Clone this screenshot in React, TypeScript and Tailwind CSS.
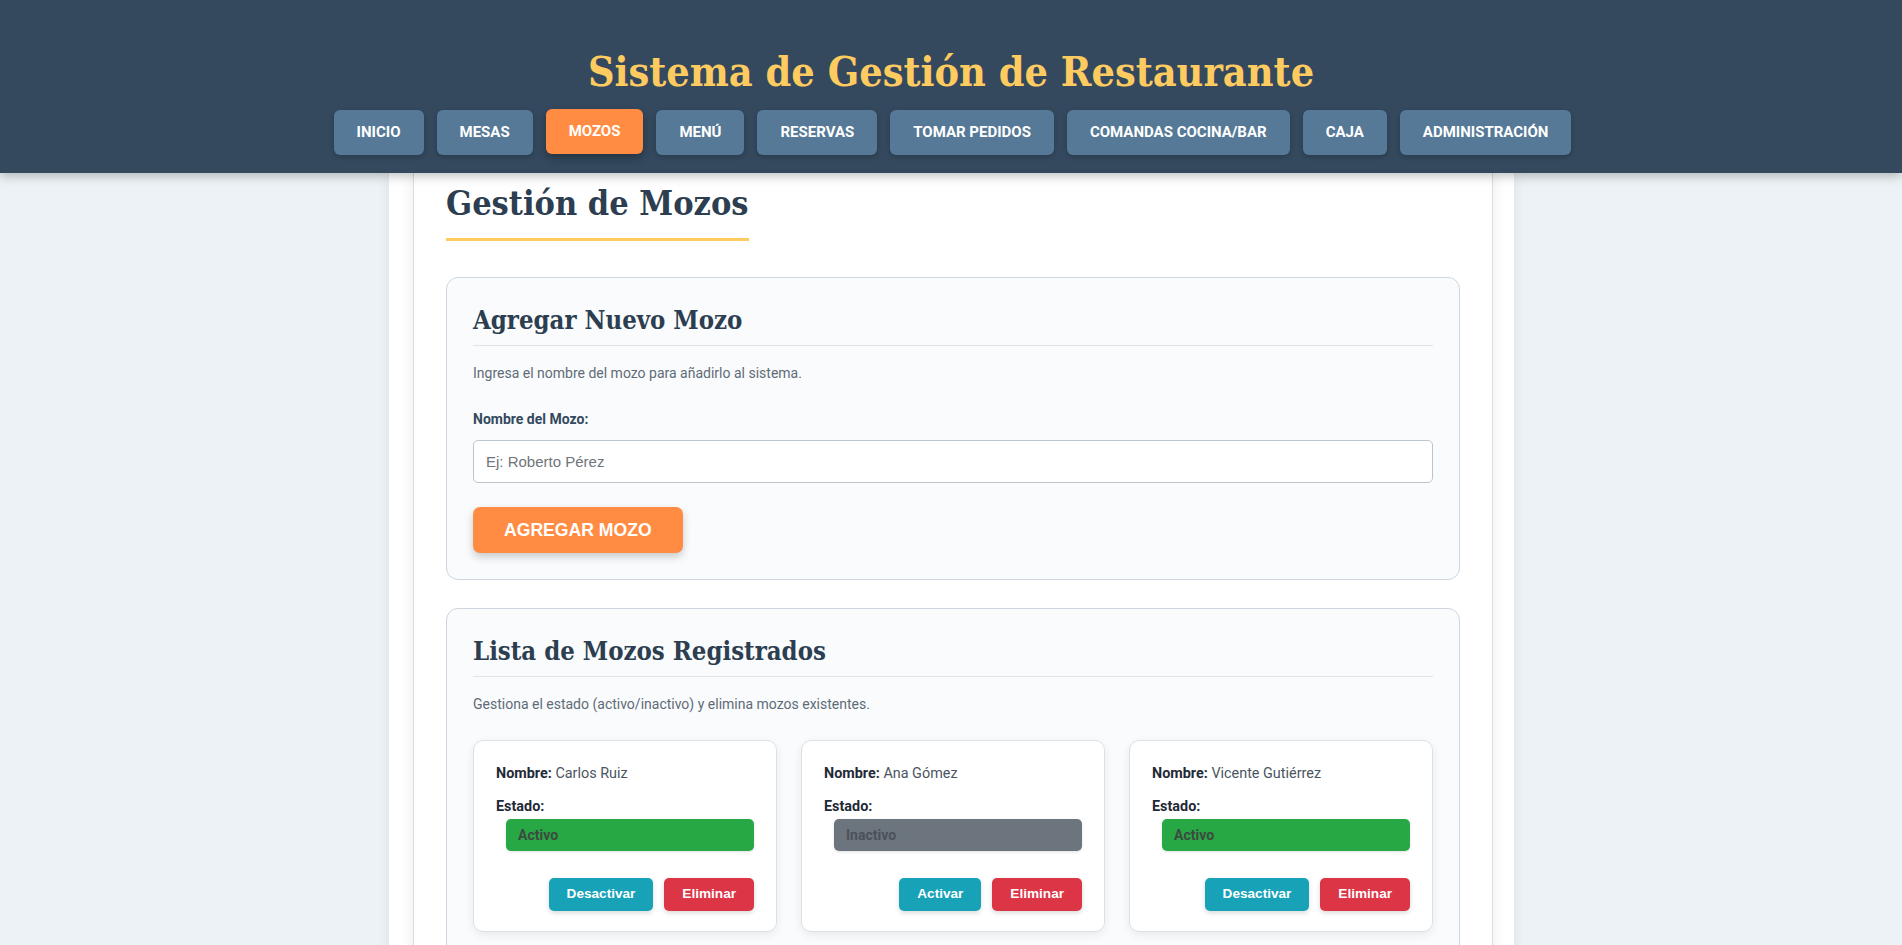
import React from "react";

const navItems = [
  "INICIO",
  "MESAS",
  "MOZOS",
  "MENÚ",
  "RESERVAS",
  "TOMAR PEDIDOS",
  "COMANDAS COCINA/BAR",
  "CAJA",
  "ADMINISTRACIÓN",
];

const mozos = [
  { nombre: "Carlos Ruiz", activo: true },
  { nombre: "Ana Gómez", activo: false },
  { nombre: "Vicente Gutiérrez", activo: true },
];

const serif = "font-['DejaVu_Serif_Condensed','DejaVu_Serif',serif] font-stretch-condensed font-bold";

function MozoCard({ nombre, activo }: { nombre: string; activo: boolean }) {
  return (
    <div className="bg-white border border-[#dde1e6] rounded-[10px] shadow-[0_3px_10px_rgba(0,0,0,0.07)] pt-[22px] px-[22px] pb-[20px]">
      <p className="text-[14.4px] leading-[21.6px] text-[#4a5561]">
        <span className="font-bold text-[#1f2a36]">Nombre:</span> {nombre}
      </p>
      <p className="mt-[11px] text-[14.4px] leading-[21.6px] font-bold text-[#1f2a36]">Estado:</p>
      <div
        className={
          "mt-[2px] ml-[10px] h-[32px] rounded-[5px] flex items-center pl-[12px] text-[14px] font-bold shadow-[0_1px_3px_rgba(0,0,0,0.12)] " +
          (activo ? "bg-[#28a745] text-[#3b4b40]" : "bg-[#6c757d] text-[#4b5159]")
        }
      >
        {activo ? "Activo" : "Inactivo"}
      </div>
      <div className="mt-[27px] flex justify-end gap-[11px] font-['Liberation_Sans',Arial,sans-serif]">
        <button className="h-[33px] px-[18px] rounded-[5px] bg-[#17a2b8] text-white font-bold text-[13.6px] shadow-[0_2px_5px_rgba(0,0,0,0.15)]">
          {activo ? "Desactivar" : "Activar"}
        </button>
        <button className="h-[33px] px-[18px] rounded-[5px] bg-[#dc3545] text-white font-bold text-[13.6px] shadow-[0_2px_5px_rgba(0,0,0,0.15)]">
          Eliminar
        </button>
      </div>
    </div>
  );
}

export default function App() {
  return (
    <div className="min-h-screen bg-[#ecf2f5] font-['Roboto',sans-serif]">
      <header className="relative z-10 h-[173px] bg-[#34495e] shadow-[0_3px_10px_rgba(0,0,0,0.25)] flex flex-col items-center pt-[51px]">
        <h1 className={serif + " text-[41px] leading-[42px] text-[#fdcb5f]"}>
          Sistema de Gestión de Restaurante
        </h1>
        <nav className="mt-[17px] flex gap-[13px] pl-[3px]">
          {navItems.map((item) => (
            <button
              key={item}
              className={
                "h-[45px] px-[23px] rounded-[6px] text-white font-bold text-[15px] uppercase " +
                (item === "MOZOS"
                  ? "bg-[#ff8c42] -translate-y-px shadow-[0_4px_8px_rgba(0,0,0,0.3)]"
                  : "bg-[#557996] shadow-[0_2px_5px_rgba(0,0,0,0.2)]")
              }
            >
              {item}
            </button>
          ))}
        </nav>
      </header>

      <main className="w-[1125px] mx-auto pl-[4px] bg-white shadow-[0_0_12px_rgba(0,0,0,0.08)]">
        <div className="w-[1080px] mx-auto border-x border-[#dcdcdc] shadow-[0_0_14px_rgba(0,0,0,0.08)] bg-white px-[32px] pt-[13px] pb-[40px]">
          <h2 className={serif + " inline-block text-[34px] leading-[35px] text-[#2c3e50] pb-[17px] border-b-[3px] border-[#fdcb5f]"}>
            Gestión de Mozos
          </h2>

          <section className="mt-[36px] bg-[#f9fbfd] border border-[#cdd6df] rounded-[12px] pt-[29px] px-[26px] pb-[26px]">
            <h3 className={serif + " text-[25.5px] leading-[26px] text-[#2c3e50] pb-[12px] border-b border-[#dfe4e8]"}>
              Agregar Nuevo Mozo
            </h3>
            <p className="mt-[17px] text-[14px] leading-[21px] text-[#5f6b76]">
              Ingresa el nombre del mozo para añadirlo al sistema.
            </p>
            <label className="block mt-[25px] text-[14px] leading-[21px] font-bold text-[#34495e]">
              Nombre del Mozo:
            </label>
            <input
              type="text"
              placeholder="Ej: Roberto Pérez"
              className="mt-[10px] block w-full h-[43px] px-[12px] bg-white border border-[#b9c6d2] rounded-[5px] text-[15px] font-['Liberation_Sans',Arial,sans-serif] placeholder:text-[#6f757b] outline-none"
            />
            <button className="mt-[24px] h-[46px] px-[31px] rounded-[7px] bg-[#ff8c42] text-white font-bold text-[17.6px] font-['Liberation_Sans',Arial,sans-serif] shadow-[0_4px_8px_rgba(0,0,0,0.2)]">
              AGREGAR MOZO
            </button>
          </section>

          <section className="mt-[28px] bg-[#f9fbfd] border border-[#cdd6df] rounded-[12px] pt-[29px] px-[26px] pb-[26px]">
            <h3 className={serif + " text-[25.5px] leading-[26px] text-[#2c3e50] pb-[12px] border-b border-[#dfe4e8]"}>
              Lista de Mozos Registrados
            </h3>
            <p className="mt-[17px] text-[14px] leading-[21px] text-[#5f6b76]">
              Gestiona el estado (activo/inactivo) y elimina mozos existentes.
            </p>
            <div className="mt-[25px] grid grid-cols-3 gap-[24px]">
              {mozos.map((m) => (
                <MozoCard key={m.nombre} nombre={m.nombre} activo={m.activo} />
              ))}
            </div>
          </section>
        </div>
      </main>
    </div>
  );
}
